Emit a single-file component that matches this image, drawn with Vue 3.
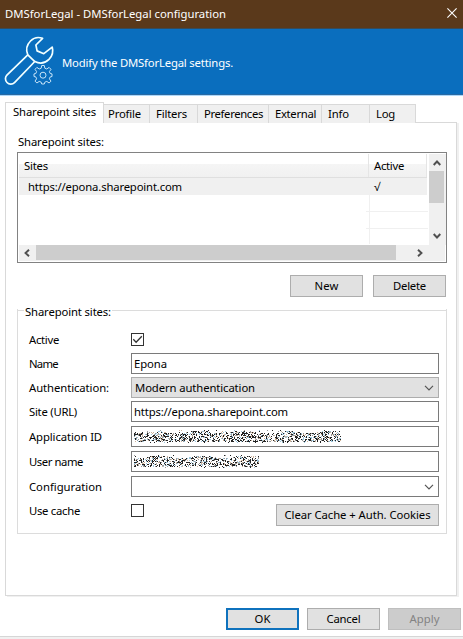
<script setup>
import { ref } from 'vue'

const tabs = [
  { label: 'Profile', size: 46, pad: 4, text: 33 },
  { label: 'Filters', size: 48, pad: 6, text: 31 },
  { label: 'Preferences', size: 71, pad: 6, text: 59 },
  { label: 'External', size: 53, pad: 6, text: 41 },
  { label: 'Info', size: 48, pad: 6, text: 21 },
  { label: 'Log', size: 46, pad: 6, text: 19 }
]

const active = ref(true)
const useCache = ref(false)

// Sets the letter spacing so that a label fills its designed width.
const vFit = {
  mounted(el, { value }) {
    const natural = el.getBoundingClientRect().width
    el.style.letterSpacing = (value - natural) / el.textContent.length + 'px'
  }
}

// Scrambled pixels that hide a private value.
function scramble(width, seed) {
  let s = seed
  const rnd = () => {
    s = (s * 1103515245 + 12345) % 2147483648
    return s / 2147483648
  }
  const layers = { dark: '', blue: '', tan: '', grey: '' }
  for (let x = 0; x < width; x++) {
    const top = 2 + Math.round(1.5 * Math.sin(x / 7 + seed))
    for (let y = 0; y < 13; y++) {
      const inside = y >= top && y < 12
      if (rnd() > (inside ? 0.5 : 0.06)) continue
      const k = rnd()
      const name = k < 0.52 ? 'dark' : k < 0.7 ? 'blue' : k < 0.83 ? 'tan' : 'grey'
      layers[name] += `M${x} ${y}h1v1h-1z`
    }
  }
  return layers
}
const appId = scramble(207, 71)
const userName = scramble(125, 39)
</script>

<template>
  <main class="window">
    <header class="titlebar">
      <span v-fit="221">DMSforLegal - DMSforLegal configuration</span>
      <svg class="close" viewBox="0 0 10 10"><path d="M.4.4 9.6 9.6M9.6.4.4 9.6" /></svg>
    </header>

    <section class="banner">
      <svg class="tool" viewBox="0 0 50 52">
        <path class="wrench" d="M37.600 1.400C33.500 -.2 28.700 .8 25.500 4C21.800 7.800 20.800 13.200 22.800 17.800L1.900 38.200C-.1 40.200 0 43.500 2 45.500C4 47.700 7.500 47.700 9.500 45.700L29.800 24.500C34.500 26.900 40 26.200 44 22.400C47.500 19 48.400 14.400 47.200 10.100L38.800 16.700L32.100 13.900L30.900 8Z" />
        <path class="wrench" d="M22.800 17.800 29.800 24.600" />
        <path class="gear" d="M36.200 31.200 36.700 28.500H39.300L39.800 31.200L41.800 32L44.100 30.400L46 32.300L44.400 34.600L45.200 36.500L47 36.900V39.500L45.200 39.900L44.400 41.800L46 44.100L44.100 46L41.800 44.400L39.800 45.200L39.300 47H36.700L36.200 45.200L34.200 44.400L31.900 46L30 44.100L31.600 41.800L30.800 39.900L29 39.500V36.900L30.800 36.500L31.600 34.600L30 32.300L31.900 30.400L34.200 32Z" />
        <circle class="gear" cx="38" cy="38.200" r="3" />
      </svg>
      <span v-fit="171">Modify the DMSforLegal settings.</span>
    </section>

    <section class="body">
      <nav class="tabs">
        <div class="tab current"><span v-fit="83">Sharepoint sites</span></div>
        <div v-for="t in tabs" :key="t.label" class="tab" :style="{ width: t.size + 'px', paddingLeft: t.pad + 'px' }">
          <span v-fit="t.text">{{ t.label }}</span>
        </div>
      </nav>

      <div class="panel">
        <div class="caption"><span v-fit="86">Sharepoint sites:</span></div>

        <div class="list">
          <div class="upper">
            <div class="table">
              <div class="line head">
                <div class="site"><span v-fit="24">Sites</span></div>
                <div class="flag"><span v-fit="30">Active</span></div>
              </div>
              <div class="line selected">
                <div class="site"><span v-fit="154">https://epona.sharepoint.com</span></div>
                <div class="flag">√</div>
              </div>
              <div class="empty"><i></i><i></i><i></i></div>
            </div>
            <div class="vscroll">
              <svg viewBox="0 0 8 6"><path d="M.7 5 4 1.500 7.300 5" /></svg>
              <div class="vthumb"></div>
              <svg class="down" viewBox="0 0 8 6"><path d="M.7 1 4 4.500 7.300 1" /></svg>
            </div>
          </div>
          <div class="hscroll">
            <svg viewBox="0 0 6 8"><path d="M5 .7 1.500 4 5 7.300" /></svg>
            <div class="hthumb"></div>
            <svg class="right" viewBox="0 0 6 8"><path d="M1 .7 4.500 4 1 7.300" /></svg>
          </div>
        </div>

        <div class="actions">
          <button class="btn"><span v-fit="24">New</span></button>
          <button class="btn"><span v-fit="33">Delete</span></button>
        </div>

        <div class="group">
          <div class="legend"><b></b><span v-fit="86">Sharepoint sites:</span><b></b></div>
          <div class="form">
            <label class="top"><span v-fit="30">Active</span></label>
            <div class="check" @click="active = !active">
              <svg v-if="active" viewBox="0 0 11 11"><path d="M1.300 5.300 4.100 8.200 9.800 2.300" /></svg>
            </div>
            <label><span v-fit="29">Name</span></label>
            <div class="field"><span v-fit="33">Epona</span></div>
            <label><span v-fit="80">Authentication:</span></label>
            <div class="field grey">
              <span v-fit="120">Modern authentication</span>
              <svg class="arrow" viewBox="0 0 10 6"><path d="M1 .8 5 4.800 9 .8" /></svg>
            </div>
            <label><span v-fit="48">Site (URL)</span></label>
            <div class="field"><span v-fit="154">https://epona.sharepoint.com</span></div>
            <label><span v-fit="73">Application ID</span></label>
            <div class="field">
              <svg class="noise" width="207" height="13" shape-rendering="crispEdges">
                <path v-for="(d, name) in appId" :key="name" :class="name" :d="d" />
              </svg>
            </div>
            <label><span v-fit="54">User name</span></label>
            <div class="field">
              <svg class="noise" width="125" height="13" shape-rendering="crispEdges">
                <path v-for="(d, name) in userName" :key="name" :class="name" :d="d" />
              </svg>
            </div>
            <label><span v-fit="73">Configuration</span></label>
            <div class="field">
              <svg class="arrow" viewBox="0 0 10 6"><path d="M1 .8 5 4.800 9 .8" /></svg>
            </div>
            <label class="bottom"><span v-fit="51">Use cache</span></label>
            <div class="last">
              <div class="check" @click="useCache = !useCache">
                <svg v-if="useCache" viewBox="0 0 11 11"><path d="M1.300 5.300 4.100 8.200 9.800 2.300" /></svg>
              </div>
              <button class="btn wide"><span v-fit="146">Clear Cache + Auth. Cookies</span></button>
            </div>
          </div>
        </div>
      </div>
    </section>

    <footer class="footer">
      <button class="btn primary"><span v-fit="16">OK</span></button>
      <button class="btn"><span v-fit="34">Cancel</span></button>
      <button class="btn disabled" disabled><span v-fit="30">Apply</span></button>
    </footer>
    <div class="edge"></div>
  </main>
</template>

<style>
body { margin: 0; background: #fff; }
</style>

<style scoped>
* { box-sizing: border-box; }
.window {
  display: flex; flex-direction: column;
  width: 463px; height: 639px; overflow: hidden;
  background: #fff; color: #000;
  font: 11.3px/16px "Noto Sans", "Open Sans", sans-serif;
}
span { white-space: nowrap; }
svg { display: block; fill: none; flex: none; overflow: visible; }
.titlebar {
  display: flex; align-items: center; justify-content: space-between;
  height: 29px; padding: 0 6px 1px 5px;
  background: #5a391b; border-bottom: 1px solid #384b58; color: #fff;
}
.close { width: 10px; height: 10px; margin-bottom: 1px; stroke: #fff; stroke-width: 1.1; }
.banner {
  display: flex; align-items: center; height: 67px; padding-left: 5px;
  background: #0a6ebe; border-bottom: 1px solid #add8fa; box-shadow: inset 0 -1px #286aa4;
  color: #fff;
}
.tool { width: 50px; height: 52px; margin: 1px 7px 0 0; }
.wrench { stroke: #f2ffff; stroke-width: 1.700; stroke-linejoin: round; }
.gear { stroke: #c7e4f8; stroke-width: 1; stroke-linejoin: round; }
.banner span { margin-top: 2px; }
.body { padding: 6px 0 0 5px; }
.tabs { position: relative; display: flex; align-items: flex-end; height: 21px; padding-right: 6px; }
.tab {
  height: 19px; flex: none; padding-top: 1px;
  background: #f0f0f0; border: 1px solid #d9d9d9; border-left: 0; border-bottom: 0;
}
.tab.current {
  position: relative; height: 21px; width: 99px; padding: 1px 0 0 7px;
  background: #fff; border-left: 1px solid #d9d9d9;
}
.current::after {
  content: ""; position: absolute; left: 0; right: 0; bottom: -1px; height: 1px; background: #fff;
}
.panel {
  width: 452px; height: 474px; margin-top: -1px; padding: 0 0 0 11px;
  border: 1px solid #d9d9d9; box-shadow: 2px 1px #f0f0f0;
}
.caption { height: 29px; padding: 11px 0 0 1px; }
.list { width: 430px; height: 111px; padding: 1px; border: 1px solid #828282; }
.upper { display: flex; height: 91px; }
.table { width: 409px; }
.line { display: flex; width: 408px; }
.head {
  height: 24px; border-bottom: 1px solid #dfdfdf;
  background: linear-gradient(#fff 0 10px, #f5f5f5 10px, #f0f0f0 24px);
}
.site { width: 349px; padding: 4px 0 0 5px; }
.flag { width: 59px; padding: 4px 0 0 5px; border-left: 1px solid #e5e5e5; border-right: 1px solid #e5e5e5; }
.selected { height: 17px; background: #f0f0f0; }
.selected .site { padding: 1px 0 0 9px; }
.selected .flag { padding: 1px 0 0 5px; border-color: #f0f0f0; }
.empty { display: grid; grid-template-rows: 17px 17px 15px; width: 62px; margin-left: 347px; height: 49px; }
.empty i { border-bottom: 1px solid #f0f0f0; background: linear-gradient(#f0f0f0, #f0f0f0) 3px 0 / 1px 100% no-repeat; }
.empty i:last-child { border: 0; }
.vscroll { display: flex; flex-direction: column; align-items: center; width: 17px; margin-left: 1px; padding-top: 6px; background: #f0f0f0; }
.vscroll svg { width: 8px; height: 6px; margin-right: 2px; stroke: #505050; stroke-width: 1.900; }
.vthumb { width: 15px; height: 32px; margin: 5px 2px 0 0; background: #cdcdcd; }
.vscroll .down { margin-top: 30px; }
.hscroll { display: flex; align-items: center; height: 16px; padding-left: 5px; background: #f0f0f0; }
.hscroll svg { width: 6px; height: 8px; margin-bottom: 1px; stroke: #505050; stroke-width: 1.900; }
.hthumb { width: 360px; height: 15px; margin: 0 21px 1px 6px; background: #cdcdcd; }
.actions { display: flex; justify-content: flex-end; gap: 10px; padding: 12px 10px 0 0; }
.btn {
  display: flex; align-items: center; justify-content: center;
  width: 73px; height: 22px; padding: 0; border: 1px solid #adadad; border-radius: 0;
  background: #e1e1e1; color: #000; font: inherit;
}
.group { width: 430px; height: 225px; margin-top: 12px; padding: 0; border: 1px solid #dcdcdc; border-top: 0; }
.legend { display: flex; gap: 1px; height: 18px; line-height: 18px; position: relative; top: -5px; }
.legend span { position: relative; top: -1px; }
.legend b { height: 1px; margin-top: 6px; background: #dcdcdc; flex: 1; }
.legend b:first-child { flex: none; width: 6px; }
.form {
  display: grid; grid-template-columns: 102px 308px;
  grid-template-rows: 22px 24px 24px 25px 25px 25px 28px 22px;
  padding: 4px 0 0 11px;
}
.field {
  display: flex; align-items: center; height: 21px; padding: 0 4px 0 2px;
  border: 1px solid #7a7a7a; background: #fff;
}
label span { position: relative; top: 3px; }
.top span { top: 1px; }
.bottom span { top: -1px; }
.field.grey { background: #e1e1e1; border-color: #adadad; padding-left: 3px; }
.arrow { width: 10px; height: 6px; margin-left: auto; stroke: #555; stroke-width: 1.200; }
.check { width: 13px; height: 13px; border: 1px solid #333; margin-top: 2px; }
.check svg { width: 11px; height: 11px; stroke: #333; stroke-width: 1.300; }
.last { display: flex; justify-content: space-between; }
.last .check { margin-top: 0; }
.wide { width: 163px; }
.dark { fill: #222; }
.blue { fill: #9cc6dd; }
.tan { fill: #cfb49b; }
.grey { fill: #999; }
.footer { display: flex; justify-content: flex-end; gap: 8px; padding: 12px 2px 0 0; height: 40px; }
.primary { border: 2px solid #0f72bd; }
.disabled { background: #ccc; border-color: #bfbfbf; color: #838383; }
.edge { flex: 1; border-top: 1px solid #d6d6d6; background: #f0f0f0; }
</style>
